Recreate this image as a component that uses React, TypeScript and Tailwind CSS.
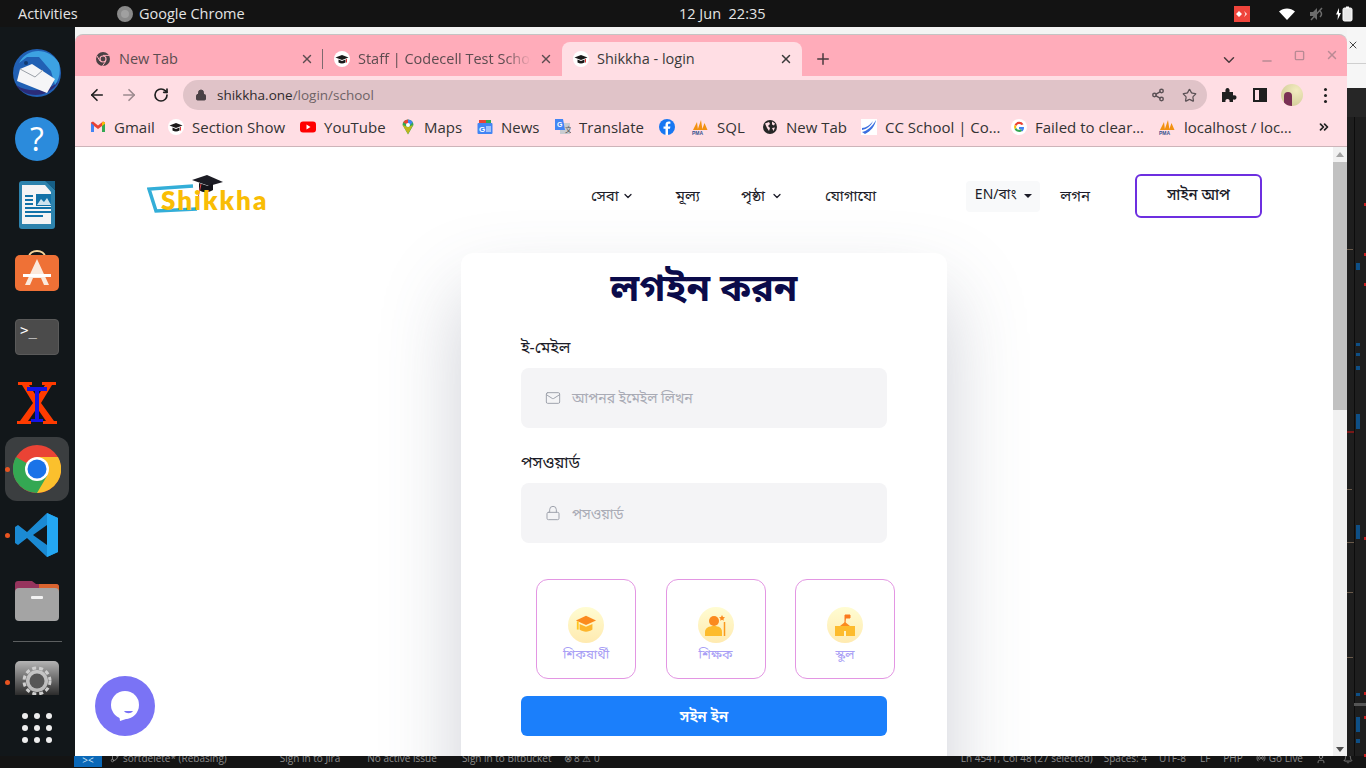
import { ArrowLeft, ArrowRight, Bell, ChevronDown, ChevronsRight, GitBranch, Lock, Mail, Minus, Plus, Radio, RotateCw, Share2, Square, Star, User, X } from "lucide-react"

const ui = "font-['Open_Sans',sans-serif]"
const bn = "font-['Noto_Sans_Bengali','Lohit_Bengali','Noto_Sans','Liberation_Sans',sans-serif]"

function CapFavicon() {
  return (
    <svg viewBox="0 0 16 16" className="w-4 h-4 shrink-0">
      <circle cx="8" cy="8" r="8" fill="#fff" />
      <path d="M1.500 6.500 8 4l6.500 2.500L8 9z" fill="#1a1a1a" />
      <path d="M4.500 8.500v3c2 1.300 5 1.300 7 0v-3L8 10z" fill="#1a1a1a" />
      <path d="M12.500 8v3.500" stroke="#d33" strokeWidth="1" />
    </svg>
  )
}

function ChromeFavicon() {
  return (
    <svg viewBox="0 0 16 16" className="w-4 h-4 shrink-0">
      <circle cx="8" cy="8" r="7" fill="#4a4044" />
      <circle cx="8" cy="8" r="3.600" fill="#ffacba" />
      <circle cx="8" cy="8" r="2.400" fill="#4a4044" />
      <path d="M8 4.400h6M5 10 2 5M10.600 10.400 7.500 15" stroke="#ffacba" strokeWidth="1" />
    </svg>
  )
}

function PmaIcon() {
  return (
    <svg viewBox="0 0 18 16" className="w-[18px] h-4 shrink-0">
      <path d="M2 11 6 3l1 8zM6.500 11 10 1l1.500 10zM11 11l2.500-7 3 7z" fill="#f29111" />
      <text x="1" y="15.500" fontSize="5" fontWeight="700" fill="#33518f" fontFamily="Liberation Sans">PMA</text>
    </svg>
  )
}

function GlobeIcon() {
  return (
    <svg viewBox="0 0 16 16" className="w-4 h-4 shrink-0">
      <circle cx="8" cy="8" r="7" fill="#262626" />
      <path d="M3 4.500 7 3l1 2-2 2 2 2-1 3-2-3zM10 2.500l3 2-1 2-2-1zM10 9l3-.500-1.500 3.500z" fill="#ffdee4" />
    </svg>
  )
}

const bookmarks = [
  {
    label: "Gmail",
    text: "w-[40px]",
    icon: (
      <svg viewBox="0 0 16 16" className="w-4 h-4 shrink-0">
        <path d="M1 3.500v9.500h3V7l4 3 4-3v6h3V3.500L13 2.500 8 6.500 3 2.500z" fill="#ea4335" />
        <path d="M1 4v9h3V6.500z" fill="#4285f4" />
        <path d="M12 6.500V13h3V4z" fill="#34a853" />
        <path d="M12 3.800V7l3-2.300V3.500l-2-1z" fill="#fbbc04" />
      </svg>
    ),
  },
  { label: "Section Show", text: "w-[94px]", icon: <CapFavicon /> },
  {
    label: "YouTube",
    text: "w-[62px]",
    icon: (
      <svg viewBox="0 0 16 16" className="w-4 h-4 shrink-0">
        <rect x="0" y="2.500" width="16" height="11" rx="3" fill="#f00" />
        <path d="M6.500 5.500v5l4-2.500z" fill="#fff" />
      </svg>
    ),
  },
  {
    label: "Maps",
    text: "w-[39px]",
    icon: (
      <svg viewBox="0 0 16 16" className="w-4 h-4 shrink-0">
        <path d="M8 .5a5.500 5.500 0 0 0-5.500 5.500L8 15.500l5.500-9.500A5.500 5.500 0 0 0 8 .5z" fill="#34a853" />
        <path d="M8 .5a5.500 5.500 0 0 1 4.800 2.800L8 8z" fill="#4285f4" />
        <path d="M3.200 3.300A5.500 5.500 0 0 1 8 .5L8 6z" fill="#ea4335" />
        <path d="M2.500 6 8 8l5-2-5 9z" fill="#fbbc04" opacity=".7" />
        <circle cx="8" cy="6" r="2" fill="#fff" />
      </svg>
    ),
  },
  {
    label: "News",
    text: "w-[40px]",
    icon: (
      <svg viewBox="0 0 16 16" className="w-4 h-4 shrink-0">
        <path d="M2 1h12v4H2z" fill="#34a853" />
        <path d="M2 1h7v3H2z" fill="#ea4335" />
        <rect x="0.500" y="4" width="15" height="11" rx="1" fill="#4285f4" />
        <text x="2" y="12.500" fontSize="8" fontWeight="700" fill="#fff" fontFamily="Liberation Sans">G</text>
        <path d="M9 8h5M9 10h5M9 12h5" stroke="#fff" strokeWidth="1" />
      </svg>
    ),
  },
  {
    label: "Translate",
    text: "w-[66px]",
    icon: (
      <svg viewBox="0 0 16 16" className="w-4 h-4 shrink-0">
        <path d="M5 4h10v11H5z" fill="#c9ccd1" />
        <path d="M0 0h8l2 11H0z" fill="#4285f4" />
        <text x="2" y="8" fontSize="7" fontWeight="700" fill="#fff" fontFamily="Liberation Sans">G</text>
        <text x="10" y="13" fontSize="7" fill="#555" fontFamily="Noto Sans CJK SC">文</text>
      </svg>
    ),
  },
  {
    label: "",
    text: "",
    icon: (
      <svg viewBox="0 0 16 16" className="w-4 h-4 shrink-0 mr-[2px]">
        <circle cx="8" cy="8" r="8" fill="#1877f2" />
        <path d="M9 16V9.800h2l.4-2.400H9V6c0-.8.3-1.200 1.300-1.200h1.100V2.700C11 2.600 10.400 2.500 9.800 2.500 7.800 2.500 6.500 3.700 6.500 5.700v1.700H4.500v2.400h2V16z" fill="#fff" />
      </svg>
    ),
  },
  { label: "SQL", text: "w-[31px]", icon: <PmaIcon /> },
  { label: "New Tab", text: "w-[61px]", icon: <GlobeIcon /> },
  {
    label: "CC School | Co…",
    text: "w-[112px]",
    icon: (
      <svg viewBox="0 0 16 16" className="w-4 h-4 shrink-0">
        <rect width="16" height="16" fill="#fff" />
        <path d="M1 13C6 12 11 8 15 1 14 7 10 12 4 15zM1 9c4 0 8-3 11-7-2 5-6 8-11 9z" fill="#3b6fe0" />
      </svg>
    ),
  },
  {
    label: "Failed to clear…",
    text: "w-[109px]",
    icon: (
      <svg viewBox="0 0 16 16" className="w-4 h-4 shrink-0">
        <circle cx="8" cy="8" r="8" fill="#fff" />
        <path d="M12.500 5.200A5 5 0 0 0 3.600 5.800L5.300 7.100A3 3 0 0 1 10.500 6z" fill="#ea4335" />
        <path d="M3.600 5.800a5 5 0 0 0 0 4.400L5.300 8.900a3 3 0 0 1 0-1.800z" fill="#fbbc04" />
        <path d="M3.600 10.200a5 5 0 0 0 8 1.200L10 10.100a3 3 0 0 1-4.700-1.200z" fill="#34a853" />
        <path d="M13 8H8v2h2.800a2.600 2.600 0 0 1-.8 1l1.600 1.400A5 5 0 0 0 13 8z" fill="#4285f4" />
      </svg>
    ),
  },
  { label: "localhost / loc…", text: "w-[112px]", icon: <PmaIcon /> },
]

// marks of the code editor's minimap showing beside the browser window
const minimap = [
  { top: 86, cls: "left-[17px] w-[2px] h-[3px] bg-[#c91f1f]" },
  { top: 136, cls: "left-[17px] w-[2px] h-[3px] bg-[#c91f1f]" },
  { top: 166, cls: "left-[17px] w-[2px] h-[3px] bg-[#c91f1f]" },
  { top: 420, cls: "left-[17px] w-[2px] h-[3px] bg-[#c91f1f]" },
  { top: 575, cls: "left-[17px] w-[2px] h-[3px] bg-[#c91f1f]" },
  { top: 599, cls: "left-[17px] w-[2px] h-[3px] bg-[#c91f1f]" },
  { top: 637, cls: "left-[17px] w-[2px] h-[3px] bg-[#c91f1f]" },
  { top: 146, cls: "left-[9px] w-[4px] h-[7px] bg-[#0e4f86]" },
  { top: 226, cls: "left-[9px] w-[4px] h-[3px] bg-[#0e4f86]" },
  { top: 236, cls: "left-[9px] w-[4px] h-[3px] bg-[#0e4f86]" },
  { top: 249, cls: "left-[9px] w-[4px] h-[4px] bg-[#0e4f86]" },
  { top: 297, cls: "left-[9px] w-[4px] h-[15px] bg-[#0e4f86]" },
  { top: 408, cls: "left-[9px] w-[4px] h-[14px] bg-[#0e4f86]" },
  { top: 576, cls: "left-[9px] w-[4px] h-[3px] bg-[#0e4f86]" },
  { top: 586, cls: "left-[7px] w-[12px] h-[3px] bg-[#555]" },
  { top: 600, cls: "left-[9px] w-[4px] h-[15px] bg-[#0e4f86]" },
  { top: 622, cls: "left-[9px] w-[4px] h-[4px] bg-[#0e4f86]" },
  { top: 132, cls: "left-0 w-[6px] h-px bg-[#6a5a4a]" },
  { top: 314, cls: "left-0 w-[7px] h-[2px] bg-[#7a1818]" },
  { top: 372, cls: "left-0 w-[5px] h-px bg-[#6a5a4a]" },
  { top: 425, cls: "left-0 w-[7px] h-px bg-[#6a5a4a]" },
  { top: 475, cls: "left-0 w-[6px] h-px bg-[#6a5a4a]" },
  { top: 540, cls: "left-0 w-[6px] h-px bg-[#6a5a4a]" },
]

function TopBar() {
  return (
    <div className={`h-[27px] shrink-0 bg-[#131313] text-[#e4e4e4] text-[14.5px] flex items-center pl-[18px] pr-2 ${ui}`}>
      <span className="w-[99px]">Activities</span>
      <span className="w-4 h-4 rounded-full bg-[#a0a0a0] border-[4px] border-[#8a8a8a] mr-[6px]" />
      <span className="w-[540px]">Google Chrome</span>
      <span className="w-[555px]">12 Jun&nbsp; 22:35</span>
      <svg viewBox="0 0 16 16" className="w-4 h-4 mr-[29px] shrink-0">
        <rect width="16" height="16" fill="#ef443b" />
        <path d="M5 5l3 3-3 3-3-3zM10 5l3 3-3 3 1.500-3z" fill="#fff" />
      </svg>
      <svg viewBox="0 0 16 16" className="w-4 h-4 mr-[14px] shrink-0">
        <path d="M0 5.500C4.500 1.500 11.500 1.500 16 5.500L8 14z" fill="#fff" />
      </svg>
      <svg viewBox="0 0 16 16" className="w-4 h-4 mr-[11px] shrink-0">
        <path d="M1 6h3l4-4v12l-4-4H1z" fill="#6c6c6c" />
        <path d="M2 14 13 2M11 5c2 2 2 4 0 6" stroke="#6c6c6c" strokeWidth="1.500" fill="none" />
      </svg>
      <svg viewBox="0 0 18 16" className="w-[18px] h-4 shrink-0">
        <path d="M3 2 0 8.500h2L1.500 14 5 7H3z" fill="#fff" />
        <rect x="7" y="2" width="9" height="13" rx="1.500" fill="#e8e8e8" stroke="#fff" />
        <rect x="10" y="0.500" width="3" height="1.500" fill="#fff" />
      </svg>
    </div>
  )
}

function DockItem({ children, active, dot, dotTop }: { children: React.ReactNode; active?: boolean; dot?: boolean; dotTop?: string }) {
  return (
    <div className={`relative w-16 h-16 ml-[5px] flex items-center justify-center rounded-xl ${active ? "bg-[#3b3e40]" : ""}`}>
      {dot && <span className={`absolute left-0 w-[5px] h-[5px] rounded-full bg-[#e95420] ${dotTop ?? "top-[30px]"}`} />}
      {children}
    </div>
  )
}

function Dock() {
  return (
    <div className="w-[75px] shrink-0 flex flex-col bg-[#12171a] pt-[14px]">
      <div className="flex flex-col gap-[2px]">
        <DockItem>
          <svg viewBox="0 0 48 48" className="w-12 h-12">
            <circle cx="24" cy="24" r="24" fill="#2160b4" />
            <path d="M3 36C10 48 34 52 46 32 40 40 18 46 3 36z" fill="#2b2c78" />
            <path d="M6 14C14-2 36-2 46 14 48 24 46 30 42 36L38 22 26 8 14 8z" fill="#3da2e2" />
            <circle cx="13" cy="14" r="2" fill="#123a70" />
            <path d="M7 20 19 15 42 30 34 44 4 32z" fill="#f5f5f7" />
            <path d="M7 20l15 8 8-7" fill="none" stroke="#9aa0a8" />
          </svg>
        </DockItem>
        <DockItem>
          <div className="w-11 h-11 rounded-full bg-[#2b8bdc] flex items-center justify-center text-white text-[32px] leading-none font-['Open_Sans',sans-serif]">?</div>
        </DockItem>
        <DockItem>
          <svg viewBox="0 0 40 48" className="w-10 h-12">
            <path d="M2 3a3 3 0 0 1 3-3h24l9 9v36a3 3 0 0 1-3 3H5a3 3 0 0 1-3-3z" fill="#2d83ad" />
            <path d="M5 4h23l6 7v32H5z" fill="#f4f4f4" />
            <path d="M28 0h10v9z" fill="#165f86" />
            <path d="M8 15h8M8 19h8M8 23h8M8 27h26M8 31h26M8 35h18" stroke="#1272a8" strokeWidth="2" />
            <rect x="19" y="13" width="15" height="12" fill="#1272a8" />
            <path d="M20 24l4-6 3 3 3-4 4 7z" fill="#cfe3ee" />
          </svg>
        </DockItem>
        <DockItem>
          <svg viewBox="0 0 44 44" className="w-11 h-11">
            <path d="M14 8c0-8 16-8 16 0" fill="none" stroke="#f5d59b" strokeWidth="2" />
            <rect y="6" width="44" height="36" rx="5" fill="#ef7136" />
            <path d="M22 10 10 36h5l3-7h8l3 7h5z" fill="#fbe9dc" />
            <path d="M8 25h28v3H8z" fill="#fff" />
          </svg>
        </DockItem>
        <DockItem>
          <div className="w-11 h-9 rounded bg-[#4b4b4b] border border-[#5a5a5a] text-white text-sm leading-4 pt-[2px] pl-[4px] font-['DejaVu_Sans_Mono',monospace]">&gt;_</div>
        </DockItem>
        <DockItem>
          <svg viewBox="0 0 44 44" className="w-11 h-11">
            <path d="M3 1h14v3h-3l8 12 8-12h-3V1h14v3h-4L26 22l13 18h3v3H28v-3h3l-9-13-9 13h3v3H2v-3h3l13-18L7 4H3z" fill="#ff3b00" />
            <path d="M12 6h20v4h-8v28h4v3H16v-3h4V10h-8z" fill="#1414e6" />
          </svg>
        </DockItem>
        <DockItem active dot>
          <svg viewBox="0 0 48 48" className="w-12 h-12">
            <circle cx="24" cy="24" r="24" fill="#ea4335" />
            <path d="M24 48A24 24 0 0 0 45 12H24z" fill="#fbc02d" />
            <path d="M3 12A24 24 0 0 0 24 48l10-17-10-7z" fill="#34a853" />
            <circle cx="24" cy="24" r="12" fill="#fff" />
            <circle cx="24" cy="24" r="9.500" fill="#1a73e8" />
          </svg>
        </DockItem>
        <DockItem dot>
          <svg viewBox="0 0 44 44" className="w-11 h-11">
            <path d="M32 0 12 19 3 12 0 14v16l3 2 9-7 20 19 11-5V5z" fill="#1b8ad3" />
            <path d="M32 0l11 5v34l-11 5z" fill="#24a7f2" />
            <path d="M32 12 18 22l14 10z" fill="#12171a" />
          </svg>
        </DockItem>
        <DockItem>
          <svg viewBox="0 0 44 44" className="w-11 h-11">
            <path d="M0 5a3 3 0 0 1 3-3h14l4 3h20a3 3 0 0 1 3 3v8H0z" fill="#96345d" />
            <path d="M24 5h17a3 3 0 0 1 3 3v6H24z" fill="#d9642f" />
            <rect y="9" width="44" height="33" rx="4" fill="#a4a4a4" />
            <rect x="16" y="17" width="12" height="3" rx="1" fill="#f2f2f2" />
          </svg>
        </DockItem>
      </div>
      <div className="h-px bg-[#5c5f60] mx-[13px] mt-[8px] mb-[4px]" />
      <DockItem dot dotTop="top-[34px]">
        <svg viewBox="0 0 44 34" className="w-11 h-[34px]">
          <defs>
            <linearGradient id="gear-panel" x1="0" y1="0" x2="0" y2="1">
              <stop offset="0" stopColor="#b4b4b4" />
              <stop offset="1" stopColor="#2c2c2c" />
            </linearGradient>
          </defs>
          <path d="M0 5a5 5 0 0 1 5-5h34a5 5 0 0 1 5 5v29H0z" fill="url(#gear-panel)" />
          <circle cx="22" cy="20" r="13" fill="none" stroke="#cfcfcf" strokeWidth="3" strokeDasharray="4 3" />
          <circle cx="22" cy="20" r="11" fill="#d0d0d0" opacity=".85" />
          <circle cx="22" cy="20" r="7.500" fill="#565656" />
        </svg>
      </DockItem>
      <div className="grid grid-cols-3 gap-[6px] w-[30px] ml-[22px] mt-[3px]">
        {Array.from({ length: 9 }).map((_, i) => (
          <span key={i} className="w-[6px] h-[6px] rounded-sm bg-[#eeeeee]" />
        ))}
      </div>
    </div>
  )
}

function Tab({ icon, title, className, fade }: { icon: React.ReactNode; title: string; className: string; fade?: boolean }) {
  return (
    <div className={`flex items-center h-[34px] shrink-0 text-[14.5px] ${ui} ${className}`}>
      {icon}
      <span className={`ml-2 flex-1 whitespace-nowrap overflow-hidden ${fade ? "mask-r-from-85%" : ""}`}>{title}</span>
      <X className="w-[14px] h-[14px] ml-2 shrink-0" strokeWidth={2.500} />
    </div>
  )
}

function Browser() {
  return (
    <div className="flex-1 min-w-0 flex flex-col rounded-t-lg overflow-hidden border-t border-[#c4c4c4] bg-[#ffacba] mt-[7px]">
      <div className="h-[41px] shrink-0 flex items-end pl-[6px]">
        <Tab icon={<ChromeFavicon />} title="New Tab" className="w-[241px] pl-[14px] pr-2 text-[#5c4c50]" />
        <span className="w-px h-5 bg-[#7d6a6e] mb-[7px]" />
        <Tab icon={<CapFavicon />} title="Staff | Codecell Test School" className="w-[239px] pl-[11px] pr-[9px] text-[#5c4c50]" fade />
        <Tab icon={<CapFavicon />} title="Shikkha - login" className="w-[240px] pl-[11px] pr-[9px] bg-[#ffdee4] rounded-t-lg text-[#3a3a3a]" />
        <Plus className="w-[18px] h-[18px] ml-[12px] mb-2 text-[#4a3a3e]" strokeWidth={2} />
        <ChevronDown className="w-[18px] h-[18px] ml-[388px] mb-[7px] text-[#4a3a3e]" />
        <Minus className="w-[14px] h-[14px] ml-[22px] mb-2 text-[#b98a94]" strokeWidth={2.500} />
        <Square className="w-[11px] h-[11px] ml-[20px] mb-[15px] text-[#b98a94]" strokeWidth={3} />
        <X className="w-[14px] h-[14px] ml-[20px] mb-[14px] text-[#b98a94]" strokeWidth={2.500} />
      </div>
      <div className="h-[34px] shrink-0 bg-[#ffdee4] flex items-center pl-[13px] pt-[4px] text-[#1f1f1f]">
        <ArrowLeft className="w-[18px] h-[18px]" strokeWidth={2.200} />
        <ArrowRight className="w-[18px] h-[18px] ml-[14px] text-[#9c8a8e]" strokeWidth={2.200} />
        <RotateCw className="w-4 h-4 ml-[15px]" strokeWidth={2.500} />
        <div className={`ml-[14px] w-[1024px] h-[30px] rounded-full bg-[#e0c3c8] flex items-center pl-3 text-[13.5px] ${ui}`}>
          <Lock className="w-3 h-3 text-[#4a4145] fill-[#4a4145]" />
          <span className="ml-[10px] text-[#2f2a2c]">shikkha.one</span>
          <span className="text-[#6e6266]">/login/school</span>
          <Share2 className="w-[14px] h-[14px] ml-auto text-[#5c5256]" strokeWidth={2.500} />
          <Star className="w-[15px] h-[15px] ml-[17px] mr-[10px] text-[#5c5256]" strokeWidth={2} />
        </div>
        <svg viewBox="0 0 16 16" className="w-4 h-4 ml-[14px] shrink-0">
          <path d="M1 5h3.500C4 2.500 5 1 6.500 1S9 2.500 8.500 5H12v3.500c2.500-.5 3.500.5 3.500 2s-1 2.500-3.500 2V15H8.500c.5-2-.5-3-2-3s-2.500 1-2 3H1z" fill="#1f1f1f" />
        </svg>
        <div className="w-[14px] h-[14px] ml-[16px] border-2 border-[#1f1f1f] flex justify-end shrink-0">
          <span className="w-[6px] bg-[#1f1f1f]" />
        </div>
        <div className="w-[22px] h-[22px] ml-[14px] rounded-full bg-[radial-gradient(circle_at_70%_30%,#f3ecc0,#c9c48e)] shrink-0 flex items-end justify-center overflow-hidden">
          <span className="w-2 h-[14px] -ml-2 rounded-t bg-[#7a2f54]" />
        </div>
        <div className="ml-[21px] flex flex-col gap-[3px]">
          <span className="w-[3px] h-[3px] rounded-full bg-[#1f1f1f]" />
          <span className="w-[3px] h-[3px] rounded-full bg-[#1f1f1f]" />
          <span className="w-[3px] h-[3px] rounded-full bg-[#1f1f1f]" />
        </div>
      </div>
      <div className={`h-[37px] shrink-0 bg-[#ffdee4] border-b border-[#cdb4b9] flex items-center pl-[15px] pr-4 pb-[2px] text-[15px] text-[#333] ${ui}`}>
        <div className="flex items-center gap-[14px]">
          {bookmarks.map((b, i) => (
            <div key={i} className="flex items-center gap-2">
              {b.icon}
              {b.label && <span className={`whitespace-nowrap ${b.text}`}>{b.label}</span>}
            </div>
          ))}
        </div>
        <ChevronsRight className="w-[14px] h-[14px] ml-auto text-[#222]" strokeWidth={3} />
      </div>
      <Page />
    </div>
  )
}

function Logo() {
  return (
    <div className="relative w-[120px] h-[40px] shrink-0">
      <svg viewBox="0 0 120 40" className="absolute inset-0 w-[120px] h-[40px]">
        <path d="M46 12 2 15 9 37 50 35" fill="none" stroke="#33aed8" strokeWidth="3.500" />
        <path d="M45 6 60 1 76 8 62 12z" fill="#1c1c24" />
        <path d="M52 9v7c4 3 9 3 14 0V9l-5 3z" fill="#14141a" />
        <path d="M54 10 51 24" stroke="#e04848" strokeWidth="1" />
      </svg>
      <span className="absolute left-[14px] top-[11px] text-[26px] leading-[30px] font-extrabold text-[#f9bd05] tracking-[2px] font-['Lato',sans-serif]">Shikkha</span>
    </div>
  )
}

function RoleCard({ label, children }: { label: string; children: React.ReactNode }) {
  return (
    <div className="w-[100px] h-[100px] rounded-xl border border-[#e396e3] flex flex-col items-center pt-[27px]">
      <div className="w-9 h-9 rounded-full bg-gradient-to-b from-[#fffcd2] to-[#ffeab0] flex items-center justify-center">
        {children}
      </div>
      <span className={`mt-[3px] text-[13px] leading-5 text-[#a99ff5] ${bn}`}>{label}</span>
    </div>
  )
}

function Page() {
  return (
    <div className="flex-1 min-h-0 bg-white flex overflow-hidden">
      <div className="relative flex-1 min-w-0 overflow-hidden">
        <header className={`h-[106px] flex items-start pl-[72px] pt-[27px] text-[15px] text-[#1c1c28] ${bn}`}>
          <Logo />
          <nav className="flex items-center h-[44px] ml-[324px]">
            <span className="pt-[2px]">সেবা</span>
            <ChevronDown className="w-3 h-3 ml-[3px]" strokeWidth={2.500} />
            <span className="ml-[42px] pt-[2px]">মূল্য</span>
            <span className="ml-[41px] pt-[2px]">পৃষ্ঠা</span>
            <ChevronDown className="w-3 h-3 ml-[6px]" strokeWidth={2.500} />
            <span className="ml-[42px] pt-[2px]">যোগাযো</span>
            <div className="ml-[90px] w-[74px] h-[31px] rounded bg-[#f8f9fa] flex items-center justify-center text-sm">
              EN/বাং
              <span className="ml-[7px] border-x-[4px] border-x-transparent border-t-[4px] border-t-[#1c1c28]" />
            </div>
            <span className="ml-5 pt-[2px]">লগন</span>
            <div className="ml-[45px] w-[127px] h-[44px] rounded-md border-2 border-[#6d2fe0] flex items-center justify-center font-medium">সাইন আপ</div>
          </nav>
        </header>
        <main className={`mx-auto w-[486px] h-[560px] rounded-xl bg-white shadow-[0_40px_80px_rgba(80,85,110,0.28)] px-[60px] ${bn}`}>
          <h1 className="text-center text-[38px] leading-[78px] font-bold text-[#0b0b4a]">লগইন করন</h1>
          <label className="block text-base leading-6 mt-[6px] text-[#1c1c28]">ই-মেইল</label>
          <div className="mt-[7px] h-[60px] rounded-lg bg-[#f4f4f6] flex items-center pl-6 text-sm text-[#a9abb5]">
            <Mail className="w-4 h-4 text-[#9fa3ad]" strokeWidth={1.500} />
            <span className="ml-[11px] pt-1">আপনর ইমেইল লিখন</span>
          </div>
          <label className="block text-base leading-6 mt-[24px] text-[#1c1c28]">পসওয়ার্ড</label>
          <div className="mt-[7px] h-[60px] rounded-lg bg-[#f4f4f6] flex items-center pl-6 text-sm text-[#a9abb5]">
            <Lock className="w-4 h-4 text-[#9fa3ad]" strokeWidth={1.500} />
            <span className="ml-[11px] pt-[5px]">পসওয়ার্ড</span>
          </div>
          <div className="mt-9 ml-[15px] w-[359px] flex justify-between">
            <RoleCard label="শিকষার্থী">
              <svg viewBox="0 0 24 24" className="w-[22px] h-[22px]">
                <path d="M1 7 12 2l11 5-11 5z" fill="#fb8a1e" />
                <path d="M5 11v6c4 3 10 3 14 0v-6l-7 3z" fill="#fdb52c" />
                <path d="M3 8v9" stroke="#ffc51f" strokeWidth="2" />
              </svg>
            </RoleCard>
            <RoleCard label="শিক্ষক">
              <svg viewBox="0 0 24 24" className="w-[24px] h-[24px]">
                <circle cx="10" cy="8" r="5" fill="#fb8a1e" />
                <path d="M1 23v-4c0-4 4-6 9-6s8 2 8 6v4z" fill="#fdbb2c" />
                <path d="M18 2l1 2 2 .3-1.500 1.500.3 2-1.800-1-1.800 1 .3-2L15 4.300l2-.3z" fill="#fb8a1e" />
                <path d="M20.500 9v14" stroke="#fb9a1e" strokeWidth="1.500" />
              </svg>
            </RoleCard>
            <RoleCard label={"\u09B8\u09CD\u0995\u09C1\u200C\u09B2"}>
              <svg viewBox="0 0 24 24" className="w-[24px] h-[24px]">
                <path d="M12 10V2h5v3h-4" fill="#fb7a1e" stroke="#fb7a1e" />
                <path d="M7 13l5-4 5 4z" fill="#fb8a1e" />
                <path d="M2 13h7v10H2zM15 13h7v10h-7zM8 13h8v10H8z" fill="#fdbb2c" />
                <path d="M11 23v-5h2v5z" fill="#fff3c4" />
              </svg>
            </RoleCard>
          </div>
          <div className="mt-[17px] h-10 rounded-md bg-[#1b7ffb] text-white text-[15px] font-semibold flex items-center justify-center pt-1">সইন ইন</div>
        </main>
        <div className="absolute left-5 bottom-5 w-[60px] h-[60px] rounded-full bg-[#7a73f5] flex items-center justify-center">
          <svg viewBox="0 0 32 32" className="w-8 h-8">
            <circle cx="16" cy="15" r="14" fill="#fff" />
            <path d="M10 24 11 31 20 28z" fill="#fff" />
            <path d="M15 21h9c-2 3-7 3-9 0z" fill="#7a73f5" />
          </svg>
        </div>
      </div>
      <div className="w-[14px] shrink-0 bg-[#f1f1f1] flex flex-col items-center">
        <span className="mt-[5px] border-x-[4px] border-x-transparent border-b-[5px] border-b-[#a3a3a3]" />
        <span className="mt-[5px] w-full h-[248px] bg-[#c1c1c1]" />
        <span className="mt-auto mb-[4px] border-x-[4px] border-x-transparent border-t-[5px] border-t-[#505050]" />
      </div>
    </div>
  )
}

function EditorStrip() {
  return (
    <div className="w-[19px] shrink-0 flex flex-col">
      <div className="h-[61px] bg-[#f6f6f6] flex flex-col">
        <X className="w-3 h-3 mt-3 text-[#444]" />
        <span className="mt-[12px] h-px bg-[#cfcfcf]" />
      </div>
      <div className="h-[29px] bg-[#262626]" />
      <div className="relative flex-1 bg-[#1e1e1e]">
        <span className="absolute left-[7px] top-0 bottom-0 w-px bg-[#0c0c0c]" />
        {minimap.map((m, i) => (
          <span key={i} className={`absolute ${m.cls}`} style={{ top: m.top }} />
        ))}
      </div>
    </div>
  )
}

function StatusBar() {
  return (
    <div className={`h-3 shrink-0 bg-[#141414] text-[10px] text-[#8c8c8c] flex items-start overflow-hidden whitespace-nowrap ${ui}`}>
      <div className="w-[74px] h-3 shrink-0" />
      <div className="w-7 h-[11px] bg-[#0a68b8] shrink-0 text-[#cfe3f5] text-[10px] leading-[8px] text-center">&gt;&lt;</div>
      <div className="flex items-center -mt-[5px] leading-3 pl-[8px] flex-1">
        <GitBranch className="w-[10px] h-[10px]" />
        <span className="ml-[3px]">sortdelete* (Rebasing)</span>
        <span className="ml-[53px]">Sign in to Jira</span>
        <span className="ml-[27px]">No active issue</span>
        <span className="ml-[25px]">Sign in to Bitbucket</span>
        <span className="ml-[12px]">⊗ 8 ⚠ 0</span>
        <span className="ml-auto">Ln 4541, Col 48 (27 selected)</span>
        <span className="ml-[11px]">Spaces: 4</span>
        <span className="ml-[12px]">UTF-8</span>
        <span className="ml-[14px]">LF</span>
        <span className="ml-[13px]">PHP</span>
        <Radio className="w-[10px] h-[10px] ml-[13px]" />
        <span className="ml-[3px]">Go Live</span>
        <User className="w-[10px] h-[10px] ml-[13px] mt-[3px]" />
        <Bell className="w-[10px] h-[10px] ml-[17px] mt-[3px] mr-[13px]" />
      </div>
    </div>
  )
}

export default function App() {
  return (
    <div className="w-[1366px] h-screen flex flex-col overflow-hidden bg-[#12171a]">
      <TopBar />
      <div className="flex-1 min-h-0 flex">
        <Dock />
        <div className="flex-1 min-w-0 bg-[#f4f4f4] flex flex-col">
          <Browser />
        </div>
        <EditorStrip />
      </div>
      <StatusBar />
    </div>
  )
}
